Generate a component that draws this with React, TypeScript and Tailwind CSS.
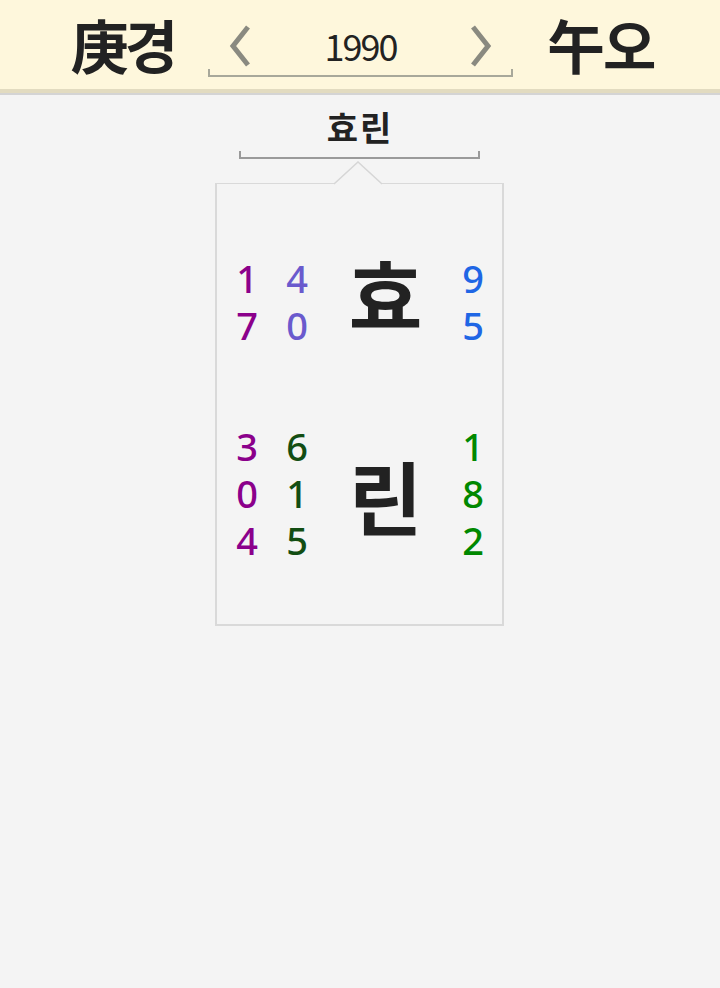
const font = { fontFamily: '"Noto Sans CJK KR", "Noto Sans", sans-serif' };

type Cell = { v: string; c: string };

function DigitCol({ items }: { items: Cell[] }) {
  return (
    <div className="flex flex-col items-center">
      {items.map((d, i) => (
        <span
          key={i}
          className="text-[38px] leading-[47px] font-medium tracking-[-1px]"
          style={{ color: d.c, fontFamily: '"Noto Sans", sans-serif' }}
        >
          {d.v}
        </span>
      ))}
    </div>
  );
}

function Chevron({ dir }: { dir: "l" | "r" }) {
  return (
    <svg width="24" height="42" viewBox="0 0 24 42">
      <path
        d={dir === "l" ? "M20 2 L5 21 L20 40" : "M4 2 L19 21 L4 40"}
        fill="none"
        stroke="#8a8a80"
        strokeWidth="5"
      />
    </svg>
  );
}

export default function App() {
  const P = "#8b008b";
  const S = "#6a5acd";
  const B = "#1f66e5";
  const D = "#124d12";
  const G = "#008800";
  return (
    <div className="min-h-[988px] w-[720px] bg-[#f4f4f4]" style={font}>
      {/* header */}
      <header className="h-[93px] bg-[#fef7dc] border-b-[4px] border-[#e2dbc0] flex items-start">
        <div className="w-[208px] flex justify-end pr-[34px] pt-[15px] text-[58px] font-bold text-[#222] leading-none tracking-[-4px]">
          庚경
        </div>
        <div className="relative w-[305px] h-[89px]">
          <div className="absolute left-0 right-0 top-[69px] h-[8px] border-b-2 border-x-2 border-[#a8a89a]" />
          <div className="absolute left-[20px] top-[25px]">
            <Chevron dir="l" />
          </div>
          <div className="absolute right-[20px] top-[25px]">
            <Chevron dir="r" />
          </div>
          <div className="absolute inset-x-0 top-[20px] text-center text-[36px] text-[#222] leading-[50px] tracking-[-2px]">
            1990
          </div>
        </div>
        <div className="pl-[34px] pt-[15px] text-[58px] font-bold text-[#222] leading-none tracking-[-2px]">午오</div>
      </header>
      <div className="h-[2px] bg-[#d4d4d4]" />

      {/* name */}
      <div className="flex flex-col items-center pt-[8px]">
        <div className="text-[34px] font-bold text-[#222] leading-[48px] tracking-[2px]">효린</div>
        <div className="w-[241px] h-[8px] border-b-2 border-x-2 border-[#9a9a9a] ml-[-1px]" />
        <div className="relative mt-[24px] w-[289px] h-[443px] ml-[-2px]">
          {/* notch */}
          <svg className="absolute left-[119px] top-[-22px]" width="48" height="24" viewBox="0 0 48 24">
            <path d="M0 23 L24 1 L48 23" fill="#f4f4f4" stroke="#d6d6d6" strokeWidth="1.5" />
          </svg>
          <div className="w-full h-full border-2 border-[#d9d9d9] border-t-[1.5px] pt-[71px] pl-[16px] pr-[15px]">
            <div className="flex items-center">
              <div className="w-[28px]">
                <DigitCol items={[{ v: "1", c: P }, { v: "7", c: P }]} />
              </div>
              <div className="w-[22px]" />
              <div className="w-[28px]">
                <DigitCol items={[{ v: "4", c: S }, { v: "0", c: S }]} />
              </div>
              <div className="flex-1 text-center text-[80px] font-bold text-[#222] leading-none pl-[2px] mt-[-20px]">효</div>
              <div className="w-[28px]">
                <DigitCol items={[{ v: "9", c: B }, { v: "5", c: B }]} />
              </div>
            </div>
            <div className="flex items-center mt-[74px]">
              <div className="w-[28px]">
                <DigitCol items={[{ v: "3", c: P }, { v: "0", c: P }, { v: "4", c: P }]} />
              </div>
              <div className="w-[22px]" />
              <div className="w-[28px]">
                <DigitCol items={[{ v: "6", c: D }, { v: "1", c: D }, { v: "5", c: D }]} />
              </div>
              <div className="flex-1 text-center text-[80px] font-bold text-[#222] leading-none pl-[2px]">린</div>
              <div className="w-[28px]">
                <DigitCol items={[{ v: "1", c: G }, { v: "8", c: G }, { v: "2", c: G }]} />
              </div>
            </div>
          </div>
        </div>
      </div>
    </div>
  );
}
